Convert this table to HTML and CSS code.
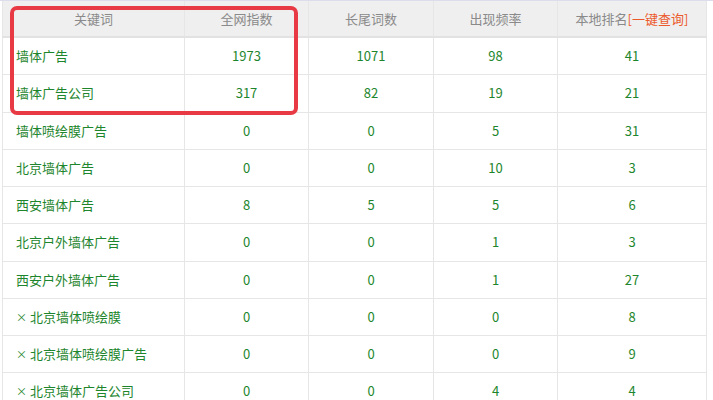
FILE: index.html
```html
<!DOCTYPE html>
<html lang="zh">
<head>
<meta charset="utf-8">
<link rel="stylesheet" href="styles.css">
</head>
<body>
<div class="wrap">
  <table class="kw">
    <colgroup>
      <col class="c1"><col class="c2"><col class="c3"><col class="c4"><col class="c5">
    </colgroup>
    <thead>
      <tr>
        <th>关键词</th><th>全网指数</th><th>长尾词数</th><th>出现频率</th><th>本地排名<span class="q">[一键查询]</span></th>
      </tr>
    </thead>
    <tbody>
      <tr><td class="name">墙体广告</td><td>1973</td><td>1071</td><td>98</td><td>41</td></tr>
      <tr><td class="name">墙体广告公司</td><td>317</td><td>82</td><td>19</td><td>21</td></tr>
      <tr><td class="name">墙体喷绘膜广告</td><td>0</td><td>0</td><td>5</td><td>31</td></tr>
      <tr><td class="name">北京墙体广告</td><td>0</td><td>0</td><td>10</td><td>3</td></tr>
      <tr><td class="name">西安墙体广告</td><td>8</td><td>5</td><td>5</td><td>6</td></tr>
      <tr><td class="name">北京户外墙体广告</td><td>0</td><td>0</td><td>1</td><td>3</td></tr>
      <tr><td class="name">西安户外墙体广告</td><td>0</td><td>0</td><td>1</td><td>27</td></tr>
      <tr><td class="name"><span class="x">×</span> 北京墙体喷绘膜</td><td>0</td><td>0</td><td>0</td><td>8</td></tr>
      <tr><td class="name"><span class="x">×</span> 北京墙体喷绘膜广告</td><td>0</td><td>0</td><td>0</td><td>9</td></tr>
      <tr><td class="name"><span class="x">×</span> 北京墙体广告公司</td><td>0</td><td>0</td><td>4</td><td>4</td></tr>
    </tbody>
  </table>
  <div class="highlight"></div>
</div>
</body>
</html>
```
FILE: styles.css
```css
html, body {
  margin: 0;
  padding: 0;
  background: #fff;
}
body {
  font-family: "Noto Sans CJK SC", "Noto Sans", sans-serif;
  font-size: 13px;
  overflow: hidden;
}
.wrap {
  position: relative;
  padding-left: 2px;
  border-top: 1px solid #dcdcec;
}
.kw {
  border-collapse: collapse;
  table-layout: fixed;
  width: 705px;
}
.c1 { width: 182px; }
.c2 { width: 124px; }
.c3 { width: 125px; }
.c4 { width: 124px; }
.c5 { width: 149px; }
.kw th, .kw td {
  border: 1px solid #e6e6e6;
  height: 36.25px;
  padding: 0;
  text-align: center;
  vertical-align: middle;
  line-height: 16px;
}
.kw th {
  background: #efefef;
  color: #8a8a8a;
  font-weight: normal;
  height: 35px;
  border-top: none;
  border-bottom: 2px solid #e2e2e2;
}
.kw td {
  color: #1d862d;
}
.kw td.name {
  text-align: left;
  padding-left: 13px;
}
.x {
  font-size: 11px;
}
.q {
  color: #ec5a2c;
}
.highlight {
  position: absolute;
  left: 10px;
  top: 5px;
  width: 280px;
  height: 101px;
  border: 4px solid #e83a45;
  border-radius: 7px;
}
```
